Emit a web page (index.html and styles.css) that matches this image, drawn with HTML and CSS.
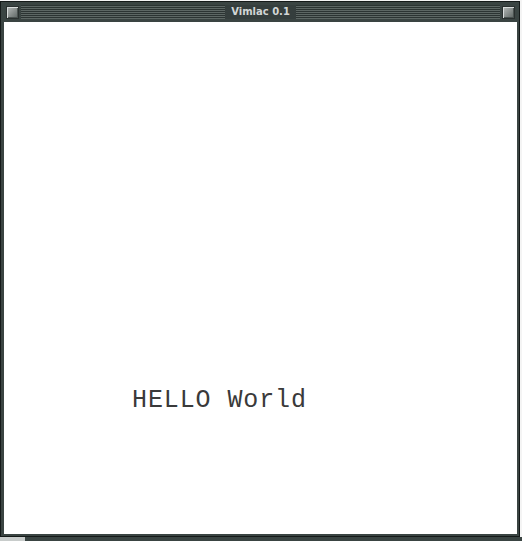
FILE: index.html
```html
<!DOCTYPE html>
<html>
<head>
<meta charset="utf-8">
<link rel="stylesheet" href="styles.css">
</head>
<body>
<div class="screen">
  <div class="window">
    <div class="titlebar">
      <div class="btn"></div>
      <div class="stripes"></div>
      <div class="title">Vimlac 0.1</div>
      <div class="stripes"></div>
      <div class="btn"></div>
    </div>
    <div class="content">
      <div class="hello">HELLO World</div>
    </div>
  </div>
  <div class="bottom-strip">
    <div class="light"></div>
    <div class="dark"></div>
  </div>
</div>
</body>
</html>
```
FILE: styles.css
```css
html, body {
  margin: 0;
  padding: 0;
  background: #ffffff;
}
.screen {
  width: 522px;
  height: 541px;
  display: flex;
  flex-direction: column;
  overflow: hidden;
  background: #f4f4f4;
}
.window {
  box-sizing: border-box;
  width: 520px;
  height: 536px;
  margin-top: 1px;
  background: #3a4442;
  border: 1px solid #151a19;
  padding: 1px 2px 2px 3px;
  display: flex;
  flex-direction: column;
}
.titlebar {
  height: 18px;
  display: flex;
  align-items: center;
  gap: 0;
}
.btn {
  width: 11px;
  height: 11px;
  margin: 0 2px;
  background: linear-gradient(135deg, #b8bcbb 0%, #8a908e 50%, #5b6361 100%);
  border: 1px solid #2a302f;
  box-shadow: inset 1px 1px 0 #d8dcdb, inset -1px -1px 0 #4a5250;
}
.stripes {
  flex: 1;
  height: 14px;
  background: repeating-linear-gradient(to bottom, #2c3433 0 1px, #5d6764 1px 2px);
}
.title {
  height: 14px;
  padding: 0 6px;
  background: #353e3d;
  color: #d2d6d5;
  font-family: "DejaVu Sans", sans-serif;
  font-weight: bold;
  font-size: 10px;
  line-height: 14px;
}
.content {
  flex: 1;
  margin-top: 1px;
  background: #ffffff;
  padding: 364px 0 0 128px;
}
.hello {
  font-family: "Liberation Mono", monospace;
  font-size: 25px;
  letter-spacing: 0.9px;
  line-height: 30px;
  color: #3a3a3a;
  font-weight: normal;
}
.bottom-strip {
  height: 4px;
  display: flex;
}
.bottom-strip .light {
  width: 25px;
  background: #c8cccb;
}
.bottom-strip .dark {
  flex: 1;
  background: #3a4442;
}
```
